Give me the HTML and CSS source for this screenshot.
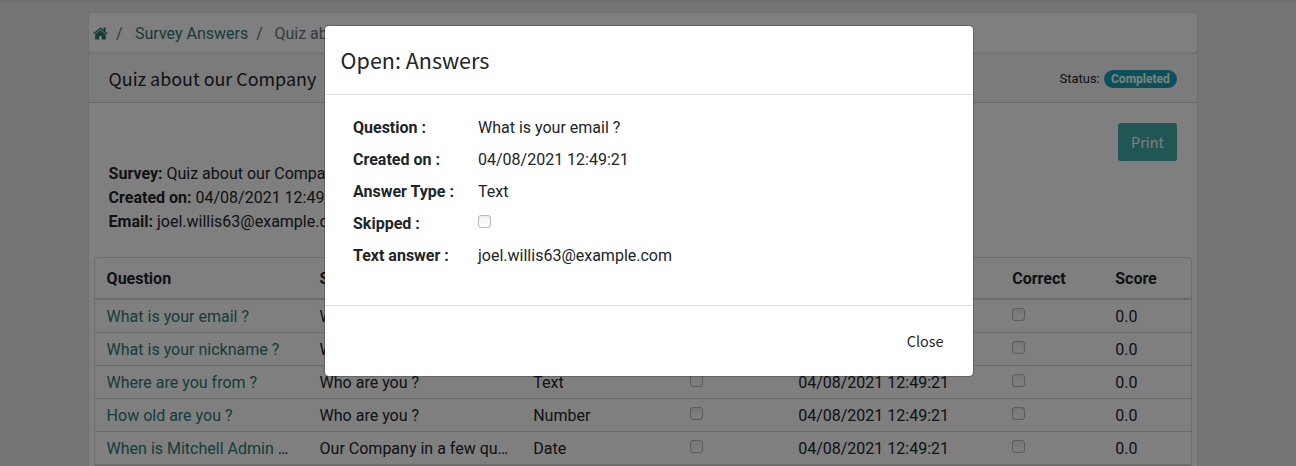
FILE: index.html
```html
<!DOCTYPE html>
<html lang="en">
<head>
<meta charset="utf-8">
<title>Survey Answers</title>
<link rel="stylesheet" href="styles.css">
</head>
<body>
<main class="page">
  <nav class="breadcrumb">
    <a class="home" href="#" aria-label="Home"><svg width="15" height="13" viewBox="0 0 15 13"><path fill="currentColor" d="M7.5 2.9 2.2 7.3V12q0 .5.5.5h3.5V9h2.6v3.500h3.500q.5 0 .5-.5V7.300zM14.600 6.200l-2-1.700V.9q0-.3-.3-.3h-1.500q-.3 0-.3.3v1.800L8.400.9Q7.500.3 6.600.9L.4 6.200q-.2.2 0 .4l.5.6q.2.2.4 0L7.500 1.900l6.200 5.300q.2.2.4 0l.5-.6q.2-.2 0-.4z"/></svg></a>
    <span class="sep">/</span><a href="#">Survey Answers</a><span class="sep sep-next">/</span><span class="muted">Quiz about our Company</span>
  </nav>
  <section class="card">
    <header class="card-header">
      <h4>Quiz about our Company</h4>
      <div class="status"><span>Status:</span><span class="badge">Completed</span></div>
    </header>
    <div class="summary">
      <div class="info">
        <div><b>Survey:</b> Quiz about our Company</div>
        <div><b>Created on:</b> 04/08/2021 12:49:21</div>
        <div><b>Email:</b> joel.willis63@example.com</div>
      </div>
      <button class="print">Print</button>
    </div>
    <div class="grid">
      <div class="row head"><div>Question</div><div>Section</div><div>Type</div><div>Skipped</div><div>Created on</div><div>Correct</div><div>Score</div></div>
      <div class="row"><div><a href="#">What is your email ?</a></div><div>Who are you ?</div><div>Text</div><div><i class="check"></i></div><div>04/08/2021 12:49:21</div><div><i class="check"></i></div><div>0.0</div></div>
      <div class="row"><div><a href="#">What is your nickname ?</a></div><div>Who are you ?</div><div>Text</div><div><i class="check"></i></div><div>04/08/2021 12:49:21</div><div><i class="check"></i></div><div>0.0</div></div>
      <div class="row"><div><a href="#">Where are you from ?</a></div><div>Who are you ?</div><div>Text</div><div><i class="check"></i></div><div>04/08/2021 12:49:21</div><div><i class="check"></i></div><div>0.0</div></div>
      <div class="row"><div><a href="#">How old are you ?</a></div><div>Who are you ?</div><div>Number</div><div><i class="check"></i></div><div>04/08/2021 12:49:21</div><div><i class="check"></i></div><div>0.0</div></div>
      <div class="row"><div><a href="#">When is Mitchell Admin</a> …</div><div>Our Company in a few qu…</div><div>Date</div><div><i class="check"></i></div><div>04/08/2021 12:49:21</div><div><i class="check"></i></div><div>0.0</div></div>
    </div>
  </section>
</main>
<div class="backdrop">
  <div class="modal" role="dialog">
    <header class="modal-header">Open: Answers</header>
    <dl class="fields">
      <dt>Question :</dt><dd>What is your email ?</dd>
      <dt>Created on :</dt><dd>04/08/2021 12:49:21</dd>
      <dt>Answer Type :</dt><dd>Text</dd>
      <dt>Skipped :</dt><dd><i class="check"></i></dd>
      <dt>Text answer :</dt><dd>joel.willis63@example.com</dd>
    </dl>
    <footer class="modal-footer"><button class="close">Close</button></footer>
  </div>
</div>
</body>
</html>
```
FILE: styles.css
```css
* { box-sizing: border-box; }
html, body { height: 100%; }
body {
  margin: 0;
  overflow: hidden;
  background: #eaeaea;
  box-shadow: inset 0 3px 3px -2px rgba(0, 0, 0, .07);
  color: #212529;
  font: 16px/24px Roboto, sans-serif;
}
a { color: #2a7b75; text-decoration: none; }
.page {
  display: flex;
  flex-direction: column;
  width: 1108px;
  height: 100%;
  margin-left: 89px;
  padding-top: 13px;
}
.breadcrumb {
  flex: none;
  display: flex;
  align-items: center;
  height: 40px;
  padding: 1px 0 0 4px;
  background: #fff;
  border-radius: 4px;
  box-shadow: 0 0 2px rgba(0, 0, 0, .12);
}
.home { display: flex; width: 15px; padding-bottom: 1px; }
.sep { color: #6c757d; margin: 0 12.400px 0 8px; }
.sep-next { margin-left: 8.200px; margin-right: 11.500px; }
.muted { color: #6c757d; }
.card {
  flex: 1;
  min-height: 0;
  overflow: hidden;
  background: #fff;
  box-shadow: 0 0 2px rgba(0, 0, 0, .12);
}
.card-header {
  display: flex;
  align-items: center;
  justify-content: space-between;
  height: 50px;
  padding: 0 20px 0 19.500px;
  background: #f7f7f7;
  border-top: 1px solid #dcdcdc;
  border-bottom: 1px solid #d0d0d0;
}
h4 { margin: 0; padding-bottom: 1px; font: 400 17.900px/24px "Noto Sans CJK SC", sans-serif; }
.status { display: flex; align-items: center; gap: 4px; font-size: 13px; padding-top: 1px; }
.badge {
  height: 18px;
  padding: 0 7.250px;
  border-radius: 9px;
  background: #17a2b8;
  color: #fff;
  font-weight: 700;
  font-size: 12px;
  line-height: 19px;
}
.summary { display: flex; justify-content: space-between; padding: 20px 20px 0 19.600px; height: 154px; }
.info { padding-top: 39px; }
button { border: 0; font: 400 14.400px/24px "Noto Sans CJK SC", sans-serif; }
.print {
  width: 59px;
  height: 38px;
  padding: 0;
  border-radius: 3px;
  background: #40aca8;
  color: #fff;
}
.grid {
  width: 1098px;
  margin-left: 5px;
  border: 1px solid #dadada;
  border-radius: 4px 4px 0 0;
}
.row {
  display: grid;
  grid-template-columns: 213px 213px 157px 108px 214px 103px 88px;
  height: 33px;
  border-bottom: 1px solid #d6d6d6;
  line-height: 33px;
}
.row > div { padding-left: 11.600px; white-space: nowrap; }
.row > div:nth-child(n+3) { padding-left: 12.200px; }
.head { height: 42px; border-bottom-width: 2px; font-weight: 700; line-height: 41px; }
.check {
  display: inline-block;
  width: 13px;
  height: 13px;
  margin-bottom: 1px;
  border: 1px solid #b9b9b9;
  border-radius: 3px;
  background: linear-gradient(#f2f2f2, #fff);
  box-shadow: inset 0 0 1px rgba(0, 0, 0, .2);
}
.backdrop {
  position: absolute;
  inset: 0;
  display: flex;
  justify-content: center;
  align-items: flex-start;
  padding: 25px 0 0 2px;
  background: rgba(0, 0, 0, .5);
}
.modal {
  width: 650px;
  height: 352px;
  background: #fff;
  background-clip: padding-box;
  border: 1px solid rgba(0, 0, 0, .2);
  border-radius: 5px;
}
.modal-header {
  height: 69px;
  padding: 16px 15px 0 15.600px;
  border-bottom: 1px solid #dee2e6;
  font: 400 21.500px/36px "Noto Sans CJK SC", sans-serif;
}
.fields {
  display: grid;
  grid-template-columns: 125px 1fr;
  grid-auto-rows: 32px;
  height: 210px;
  margin: 0;
  padding: 17px 28px 0;
  line-height: 32px;
}
.fields dt { font-weight: 700; }
.fields dd { margin: 0; }
.modal-footer {
  display: flex;
  justify-content: flex-end;
  height: 71px;
  padding: 16px 16px;
  border-top: 1px solid #dee2e6;
}
.close { height: 38px; padding: 0 13.500px; background: #fff; color: #212529; }
```
